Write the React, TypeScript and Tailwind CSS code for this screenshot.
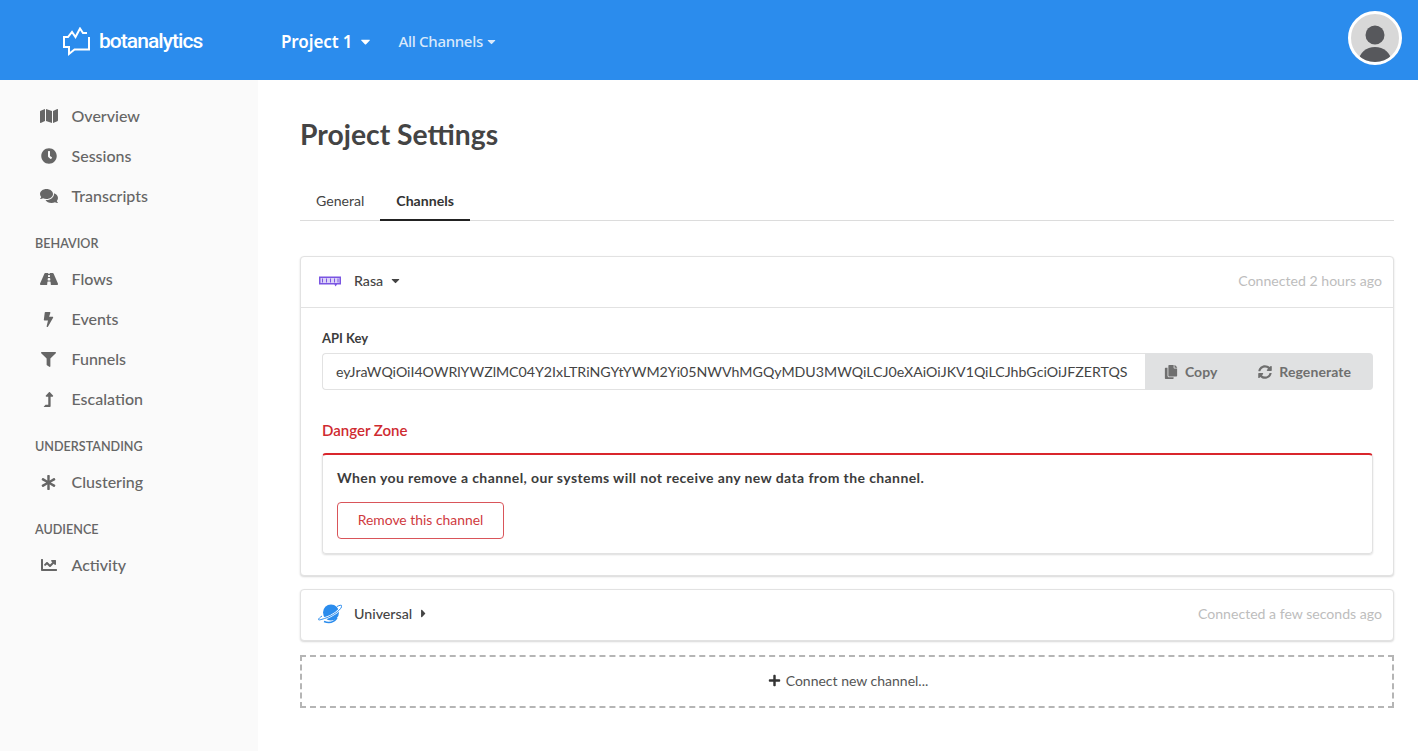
import type { ReactNode } from 'react'
import {
  FaAsterisk,
  FaBolt,
  FaCaretDown,
  FaCaretRight,
  FaChartLine,
  FaClock,
  FaComments,
  FaCopy,
  FaFilter,
  FaLevelUpAlt,
  FaMap,
  FaPlus,
  FaRoad,
  FaSyncAlt,
} from 'react-icons/fa'

const API_KEY =
  'eyJraWQiOiI4OWRlYWZlMC04Y2IxLTRiNGYtYWM2Yi05NWVhMGQyMDU3MWQiLCJ0eXAiOiJKV1QiLCJhbGciOiJFZERTQS'

function NavItem({ icon, label }: { icon: ReactNode; label: string }) {
  return (
    <div className="flex h-10 items-center pl-[39px] text-[#666]">
      <span className="flex w-[19px] justify-center text-[16px]">{icon}</span>
      <span className="ml-[13.5px] text-[16px] font-medium">{label}</span>
    </div>
  )
}

function NavHeading({ children }: { children: ReactNode }) {
  return (
    <div className="flex h-[43px] items-center pl-[35px] pt-[13px] text-[12.6px] font-semibold text-[#666]">
      {children}
    </div>
  )
}

function Sidebar() {
  return (
    <aside className="w-[258px] shrink-0 bg-[#fafafa] pb-[16px] pt-[16px]">
      <NavItem icon={<FaMap className="text-[18px]" />} label="Overview" />
      <NavItem icon={<FaClock />} label="Sessions" />
      <NavItem icon={<FaComments className="text-[18px]" />} label="Transcripts" />
      <NavHeading>BEHAVIOR</NavHeading>
      <NavItem icon={<FaRoad className="text-[18px]" />} label="Flows" />
      <NavItem icon={<FaBolt className="text-[15px]" />} label="Events" />
      <NavItem icon={<FaFilter className="text-[15px]" />} label="Funnels" />
      <NavItem icon={<FaLevelUpAlt className="text-[15px]" />} label="Escalation" />
      <NavHeading>UNDERSTANDING</NavHeading>
      <NavItem icon={<FaAsterisk className="text-[15px]" />} label="Clustering" />
      <NavHeading>AUDIENCE</NavHeading>
      <NavItem icon={<FaChartLine />} label="Activity" />
    </aside>
  )
}

function Header() {
  return (
    <header className="flex h-20 items-center bg-[#2b8ced] text-white">
      <div className="ml-[63px] mt-[3px] flex w-[218px] items-center">
        <svg viewBox="0 0 28 30" className="h-[30px] w-[28px]" fill="none" stroke="white" strokeWidth="2">
          <path d="M1 14 V10 H5 L9 5 L12.5 10 L17 1.5 L20 6 H24" strokeLinejoin="miter" />
          <path d="M1 14 V20 H6 V27 L11.5 22.5 H26 V10" strokeLinejoin="miter" />
        </svg>
        <span className="ml-[8px] font-['Roboto',sans-serif] text-[21px] font-medium tracking-[-0.95px]">
          botanalytics
        </span>
      </div>
      <div className="mt-[3px] flex items-center font-['Noto_Sans',sans-serif] text-[17px] font-semibold tracking-[-0.1px]">
        Project 1
        <FaCaretDown className="ml-[6px] text-[15px]" />
      </div>
      <div className="ml-[25px] mt-[3px] flex items-center font-['Noto_Sans',sans-serif] text-[15px] font-medium tracking-[-0.3px] text-[#d9e9fb]">
        All Channels
        <FaCaretDown className="ml-[2px] text-[13px]" />
      </div>
      <div className="mb-[4px] ml-auto mr-[16px] h-[54px] w-[54px] overflow-hidden rounded-full border-[3px] border-white bg-[#d8d8d8]">
        <svg viewBox="0 0 48 48" className="h-full w-full" fill="#57585c">
          <circle cx="24" cy="21" r="9.5" />
          <ellipse cx="24" cy="47" rx="16" ry="14" />
        </svg>
      </div>
    </header>
  )
}

function RasaIcon() {
  return (
    <svg viewBox="0 0 24 12" className="h-[12px] w-[24px]">
      <path d="M1 1.5 H23 V9.5 H19 L17.5 11.5 L16.5 9.5 H1 Z" fill="#7a55e2" />
      <rect x="2.5" y="3" width="19" height="5" fill="#dcd3f8" />
      <path d="M4.5 3.5 V7.5 M8.5 3.5 V7.5 M12.5 3.5 V7.5 M16.5 3.5 V7.5 M20 3.5 V7.5" stroke="#7a55e2" strokeWidth="1" />
    </svg>
  )
}

function PlanetIcon() {
  return (
    <svg viewBox="0 0 24 20" className="h-[20px] w-[24px]">
      <circle cx="13" cy="8.5" r="8" fill="#2b8ced" />
      <path
        d="M19 2.5 C23 0.5 24.5 1 23.5 3 C22 6.5 15 11.5 8 14 C3.5 15.5 0.5 16.5 0.5 15.5 C0.5 14.5 2 13.5 4 12"
        fill="none"
        stroke="#ffffff"
        strokeWidth="2.4"
      />
      <path
        d="M19 2.5 C23 0.5 24.5 1 23.5 3 C22 6.5 15 11.5 8 14 C3.5 15.5 0.5 16.5 0.5 15.5 C0.5 14.5 2 13.5 4 12"
        fill="none"
        stroke="#2b8ced"
        strokeWidth="1"
      />
      <path d="M6 17.5 C11 19.5 16 18 19 14" fill="none" stroke="#2b8ced" strokeWidth="1.4" />
    </svg>
  )
}

function ChannelHeader({
  icon,
  name,
  open,
  connected,
}: {
  icon: ReactNode
  name: string
  open: boolean
  connected: string
}) {
  return (
    <div className="flex h-[50px] items-center pb-[3px] pl-[16px] pr-[11px]">
      <span className="flex w-[26px] justify-center">{icon}</span>
      <span className="ml-[11px] text-[14.2px] font-medium text-[#444]">{name}</span>
      {open ? (
        <FaCaretDown className="ml-[6px] text-[13px] text-[#444]" />
      ) : (
        <FaCaretRight className="ml-[5px] text-[13px] text-[#444]" />
      )}
      <span className="ml-auto text-[14.1px] text-[#bdbdbd]">{connected}</span>
    </div>
  )
}

function RasaCard() {
  return (
    <section className="rounded-[4px] border border-[#e2e2e2] bg-white shadow-[0_1px_2px_rgba(0,0,0,0.16)]">
      <ChannelHeader icon={<RasaIcon />} name="Rasa" open connected="Connected 2 hours ago" />
      <div className="border-t border-[#e2e2e2] pb-[21px] pl-[21px] pr-[20px] pt-[21px]">
        <div className="text-[13px] font-bold leading-[18px] text-[#3c3c3c]">API Key</div>
        <div className="mt-[6px] flex h-[37px]">
          <div className="flex min-w-0 flex-1 items-center overflow-hidden rounded-l-[4px] border border-r-0 border-[#e2e2e2] pl-[13px] text-[14.2px] text-[#444]">
            <span className="whitespace-nowrap">{API_KEY}</span>
          </div>
          <div className="flex w-[228px] shrink-0 items-center rounded-r-[4px] bg-[#e0e1e2] pl-[19px] text-[14px] font-bold text-[#6f6f6f]">
            <FaCopy className="text-[14px]" />
            <span className="ml-[7px]">Copy</span>
            <FaSyncAlt className="ml-[41px] text-[14px]" />
            <span className="ml-[7px] tracking-[0.1px]">Regenerate</span>
          </div>
        </div>
        <div className="mt-[29px] text-[15px] font-semibold leading-[22px] text-[#cf2a30]">Danger Zone</div>
        <div className="mt-[12px] rounded-[4px] border border-t-2 border-[#e2e2e2] border-t-[#d9262c] px-[14px] pb-[14px] pt-[13px] shadow-[0_1px_2px_rgba(0,0,0,0.14)]">
          <div className="text-[14px] font-bold leading-[20px] tracking-[0.4px] text-[#3c3c3c]">
            When you remove a channel, our systems will not receive any new data from the channel.
          </div>
          <button className="mt-[14px] flex h-[37px] w-[167px] items-center justify-center rounded-[4px] border border-[#d9555a] text-[13.9px] text-[#cf3a40]">
            Remove this channel
          </button>
        </div>
      </div>
    </section>
  )
}

export default function App() {
  return (
    <div className="flex min-h-[751px] flex-col bg-white font-['Lato',sans-serif]">
      <Header />
      <div className="flex flex-1">
        <Sidebar />
        <main className="min-w-0 flex-1 pl-[42px] pr-[24px]">
          <h1 className="mt-[35px] text-[28.3px] font-bold leading-[38px] text-[#444]">Project Settings</h1>
          <div className="mt-[29px] flex h-[39px] border-b border-[#dcdcdc] text-[14.1px]">
            <div className="flex h-[39px] items-center px-[16px] pb-[2px] text-[#444]">General</div>
            <div className="flex h-[39px] items-center border-b-[2px] border-[#222] px-[16px] font-bold text-[#333]">
              Channels
            </div>
          </div>
          <div className="mt-[35px]">
            <RasaCard />
          </div>
          <section className="mt-[13px] rounded-[4px] border border-[#e2e2e2] bg-white shadow-[0_1px_2px_rgba(0,0,0,0.16)]">
            <ChannelHeader icon={<PlanetIcon />} name="Universal" open={false} connected="Connected a few seconds ago" />
          </section>
          <div className="mt-[14px] flex h-[53px] items-center justify-center border-2 border-dashed border-[#b5b5b5] pb-[2px] pl-[2px] text-[14px] text-[#555]">
            <FaPlus className="mr-[5px] text-[13px] text-[#333]" />
            Connect new channel...
          </div>
        </main>
      </div>
    </div>
  )
}
